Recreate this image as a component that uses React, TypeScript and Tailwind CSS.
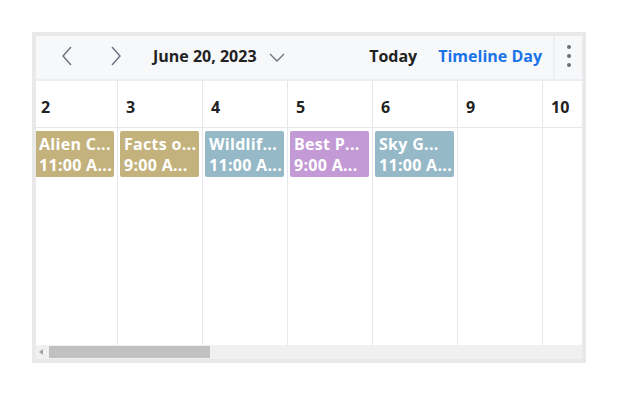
import React from "react";

type Ev = { title: string; time: string; color: string };

const days: { label: string; ev?: Ev }[] = [
  { label: "2", ev: { title: "Alien C...", time: "11:00 A...", color: "bg-[#c4b27c]" } },
  { label: "3", ev: { title: "Facts o...", time: "9:00 A...", color: "bg-[#c4b27c]" } },
  { label: "4", ev: { title: "Wildlif...", time: "11:00 A...", color: "bg-[#95b9c7]" } },
  { label: "5", ev: { title: "Best P...", time: "9:00 A...", color: "bg-[#c39ad6]" } },
  { label: "6", ev: { title: "Sky G...", time: "11:00 A...", color: "bg-[#95b9c7]" } },
  { label: "9" },
  { label: "10" },
];

function Chevron({ dir }: { dir: "left" | "right" }) {
  return (
    <svg width="12" height="20" viewBox="0 0 12 20" fill="none" stroke="#6b7280" strokeWidth="1.4">
      {dir === "left" ? <path d="M10 1 L2 10 L10 19" /> : <path d="M2 1 L10 10 L2 19" />}
    </svg>
  );
}

export default function App() {
  return (
    <div className="min-h-[396px] bg-white pl-8 pt-8 font-['Open_Sans',sans-serif]">
      <div className="flex h-[331px] w-[554px] flex-col border-4 border-[#e9e9e9] bg-white">
        {/* toolbar */}
        <div className="flex h-[45px] shrink-0 items-stretch border-b-2 border-[#eceef2] bg-[#f7f8fa]">
          <div className="flex flex-1 items-center pb-[3px]">
            <div className="ml-[25px] flex items-center gap-[37px]">
              <Chevron dir="left" />
              <Chevron dir="right" />
            </div>
            <span className="ml-[31px] text-[16px] font-bold text-[#222]">June 20, 2023</span>
            <svg className="ml-[12px] mt-[3px]" width="16" height="9" viewBox="0 0 16 9" fill="none" stroke="#6b7280" strokeWidth="1.3">
              <path d="M1 1 L8 8 L15 1" />
            </svg>
            <span className="ml-auto text-[16px] font-bold text-[#222]">Today</span>
            <span className="ml-[21px] text-[16px] font-bold text-[#1a73e8]">Timeline Day</span>
          </div>
          <div className="ml-[11px] flex w-[29px] flex-col items-center justify-center gap-[5px] border-l-2 border-[#eceef2] pb-[3px]">
            <span className="h-[4px] w-[4px] rounded-full bg-[#6b6f76]" />
            <span className="h-[4px] w-[4px] rounded-full bg-[#6b6f76]" />
            <span className="h-[4px] w-[4px] rounded-full bg-[#6b6f76]" />
          </div>
        </div>

        {/* grid */}
        <div className="flex-1 overflow-hidden">
          <div className="ml-[-3px] flex h-full">
            {days.map((d) => (
              <div key={d.label} className="flex w-[85px] shrink-0 flex-col border-r border-[#e6e7ec]">
                <div className="flex h-[47px] items-center border-b border-[#e6e7ec] pl-[8px] pt-[6px] text-[16px] font-bold text-[#222]">
                  {d.label}
                </div>
                {d.ev && (
                  <div
                    className={`ml-[2px] mr-[3px] mt-[3px] h-[46px] rounded-[2px] px-[4px] pt-[3px] text-[16px] font-bold leading-[21px] tracking-[0.3px] text-white ${d.ev.color}`}
                  >
                    <div className="whitespace-nowrap">{d.ev.title}</div>
                    <div className="whitespace-nowrap">{d.ev.time}</div>
                  </div>
                )}
              </div>
            ))}
          </div>
        </div>

        {/* scrollbar */}
        <div className="flex h-[14px] shrink-0 items-center bg-[#f0f0f0]">
          <svg className="ml-[3px]" width="4" height="6" viewBox="0 0 4 6">
            <path d="M4 0 L0 3 L4 6 Z" fill="#a3a3a3" />
          </svg>
          <div className="ml-[6px] h-[12px] w-[161px] bg-[#c1c1c1]" />
        </div>
      </div>
    </div>
  );
}
